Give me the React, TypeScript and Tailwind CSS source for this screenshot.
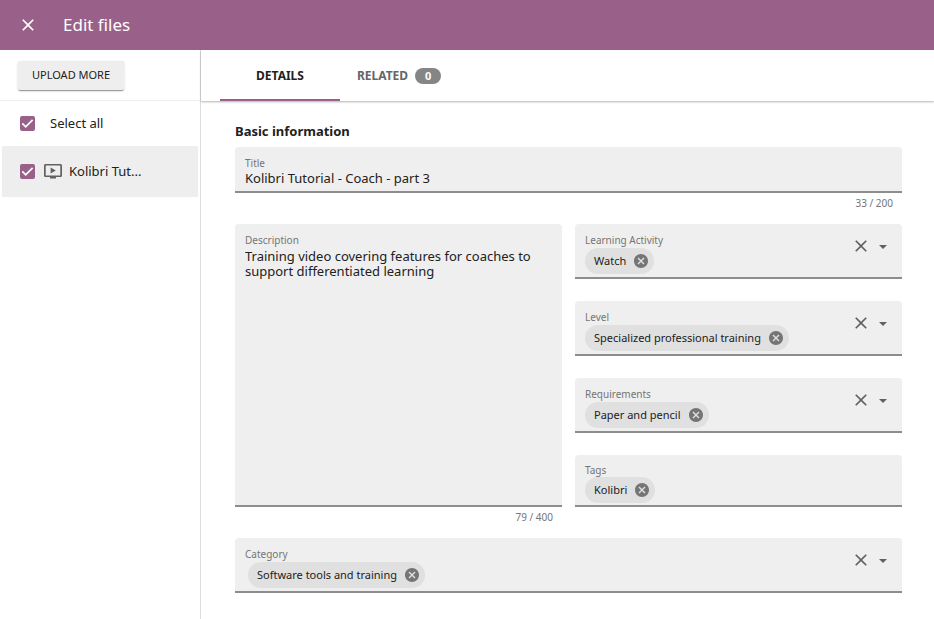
import { useState } from "react";
import type { ReactNode } from "react";

function CloseIcon({ className }: { className: string }) {
  return (
    <svg viewBox="0 0 24 24" className={className} fill="currentColor" aria-hidden="true">
      <path d="M19 6.41 17.59 5 12 10.59 6.41 5 5 6.41 10.59 12 5 17.59 6.41 19 12 13.41 17.59 19 19 17.59 13.41 12z" />
    </svg>
  );
}

function VideoIcon() {
  return (
    <svg viewBox="0 0 18 15" className="h-[15px] w-[18px] shrink-0 text-[#616161]" fill="currentColor" aria-hidden="true">
      <path
        fillRule="evenodd"
        d="M1.7 0h14.6C17.3 0 18 .7 18 1.6v9.8c0 .9-.7 1.6-1.7 1.6H12v1.5H6V13H1.7C.7 13 0 12.3 0 11.4V1.6C0 .7.7 0 1.7 0zm0 1.6v9.8h14.6V1.6z"
      />
      <path d="M6.6 3.4v6.2l5.2-3.1z" />
    </svg>
  );
}

function Tick({ id, label }: { id: string; label: string }) {
  return (
    <span className="grid h-[15px] w-[15px] shrink-0 place-items-center">
      <input
        id={id}
        type="checkbox"
        defaultChecked
        aria-label={label}
        className="peer col-start-1 row-start-1 h-[15px] w-[15px] appearance-none rounded-xs border-2 border-[#616161] checked:border-[#996189] checked:bg-[#996189]"
      />
      <svg
        viewBox="0 0 15 15"
        className="pointer-events-none col-start-1 row-start-1 hidden h-[15px] w-[15px] peer-checked:block"
        fill="none"
        stroke="white"
        strokeWidth="1.7"
        aria-hidden="true"
      >
        <path d="M2.3 7.4 5.7 10.8 12.6 3.9" />
      </svg>
    </span>
  );
}

function Chip({ text, indent = false }: { text: string; indent?: boolean }) {
  return (
    <span
      className={
        indent
          ? "ml-[3px] flex h-[26px] shrink-0 items-center gap-2 rounded-full bg-[#e0e0e0] pr-[6px] pl-[9px] text-[11px]"
          : "flex h-[26px] shrink-0 items-center gap-2 rounded-full bg-[#e0e0e0] pr-[6px] pl-[9px] text-[11px]"
      }
    >
      {text}
      <button type="button" aria-label={`Remove ${text}`} className="text-[#757575]">
        <svg viewBox="2 2 20 20" className="block h-[14px] w-[14px]" fill="currentColor" aria-hidden="true">
          <path d="M12 2C6.47 2 2 6.47 2 12s4.47 10 10 10 10-4.47 10-10S17.53 2 12 2zm5 13.59L15.59 17 12 13.41 8.41 17 7 15.59 10.59 12 7 8.41 8.41 7 12 10.59 15.59 7 17 8.41 13.41 12z" />
        </svg>
      </button>
    </span>
  );
}

const box = "rounded-t border-b-2 border-[#8d8d8d] bg-[#efefef] px-[10px]";
const labelText = "block text-[10px] leading-[14px] text-[#757575]";

function ChipField({
  id,
  label,
  chip,
  indent,
  menu = true,
}: {
  id: string;
  label: string;
  chip: string;
  indent?: boolean;
  menu?: boolean;
}) {
  return (
    <div className={`flex ${box} ${menu ? "h-[55px]" : "h-[52px]"}`}>
      <div className={menu ? "min-w-0 flex-1 pt-[9px]" : "min-w-0 flex-1 pt-2"}>
        <label htmlFor={id} className={labelText}>
          {label}
        </label>
        <div className={menu ? "flex items-center pt-px" : "flex items-center"}>
          <Chip text={chip} indent={indent} />
          <input id={id} type="text" className="w-0 min-w-0 flex-1 bg-transparent text-[13px] outline-none" />
        </div>
      </div>
      {menu && (
        <div className="flex items-start gap-1 pt-3 pr-px text-[#616161]">
          <button type="button" aria-label={`Clear ${label}`}>
            <CloseIcon className="block h-5 w-5" />
          </button>
          <button type="button" aria-label={`Open ${label}`}>
            <svg viewBox="0 0 16 20" className="block h-5 w-4" fill="currentColor" aria-hidden="true">
              <path d="M4 9h8l-4 4z" />
            </svg>
          </button>
        </div>
      )}
    </div>
  );
}

function Tab({ active, onClick, children }: { active: boolean; onClick: () => void; children: ReactNode }) {
  return (
    <button
      type="button"
      role="tab"
      aria-selected={active}
      onClick={onClick}
      className={
        active
          ? "flex min-w-[120px] items-center justify-center border-b-2 border-[#996189] pt-[3px] text-[12px] font-bold text-[#212121]"
          : "flex min-w-[118px] items-center justify-center gap-[7px] border-b-2 border-transparent pt-[3px] text-[12px] font-bold text-[#666666]"
      }
    >
      {children}
    </button>
  );
}

export default function App() {
  const [tab, setTab] = useState("details");
  return (
    <div className="flex min-h-screen flex-col bg-white font-['Noto_Sans',sans-serif] text-[13px] text-[#212121]">
      <header className="flex h-[50px] items-center gap-[25px] bg-[#996189] pl-[18px] text-white">
        <button type="button" aria-label="Close">
          <CloseIcon className="block h-5 w-5" />
        </button>
        <h1 className="text-[17px]">Edit files</h1>
      </header>

      <div className="flex flex-1">
        <aside className="w-[201px] shrink-0 border-r border-[#dddddd]">
          <div className="flex h-[51px] items-center border-b border-[#eeeeee] pl-[18px]">
            <button
              type="button"
              className="h-[29px] rounded-xs bg-[#eeeeee] px-[14px] text-[11px] shadow-[0_2px_1px_-1px_rgba(0,0,0,0.25),0_1px_1px_rgba(0,0,0,0.14),0_1px_3px_rgba(0,0,0,0.14)]"
            >
              UPLOAD MORE
            </button>
          </div>
          <div className="flex h-[45px] items-center gap-[15px] pl-5">
            <Tick id="all" label="Select all" />
            <label htmlFor="all">Select all</label>
          </div>
          <div className="mx-[2px] flex h-[51px] items-center bg-[#eeeeee] pl-[18px]">
            <Tick id="file" label="Kolibri Tutorial" />
            <label htmlFor="file" className="flex items-center gap-[7px] pl-[9px]">
              <VideoIcon />
              Kolibri Tut...
            </label>
          </div>
        </aside>

        <main className="min-w-0 flex-1">
          <div
            role="tablist"
            className="flex h-[51px] pl-[19px] shadow-[0_1px_2px_rgba(0,0,0,0.3)]"
          >
            <Tab active={tab === "details"} onClick={() => setTab("details")}>
              DETAILS
            </Tab>
            <Tab active={tab === "related"} onClick={() => setTab("related")}>
              RELATED
              <span className="flex h-4 w-[26px] items-center justify-center rounded-full bg-[#858585] text-[11px] text-white">
                0
              </span>
            </Tab>
          </div>

          <form className="pt-[19px] pr-8 pb-6 pl-[34px]">
            <h2 className="pb-[5px] text-[13px] leading-[22px] font-bold">Basic information</h2>

            <div className={`h-[46px] pt-[9px] ${box}`}>
              <label htmlFor="title" className={labelText}>
                Title
              </label>
              <input
                id="title"
                type="text"
                defaultValue="Kolibri Tutorial - Coach - part 3"
                className="block h-[18px] w-full bg-transparent text-[13px] outline-none"
              />
            </div>
            <p className="pt-[3px] pr-[9px] pb-[14px] text-right text-[10px] leading-[14px] text-[#757575]">33 / 200</p>

            <div className="grid grid-cols-2 gap-x-[13px]">
              <div className={`flex flex-col pt-[9px] ${box}`}>
                <label htmlFor="description" className={labelText}>
                  Description
                </label>
                <textarea
                  id="description"
                  defaultValue="Training video covering features for coaches to support differentiated learning"
                  className="block w-full flex-1 resize-none bg-transparent pt-[2px] text-[13px] leading-[15px] outline-none"
                />
              </div>
              <div className="flex flex-col gap-[22px]">
                <ChipField id="activity" label="Learning Activity" chip="Watch" />
                <ChipField id="level" label="Level" chip="Specialized professional training" />
                <ChipField id="requirements" label="Requirements" chip="Paper and pencil" />
                <ChipField id="tags" label="Tags" chip="Kolibri" menu={false} />
              </div>
              <p className="pt-[3px] pr-[9px] pb-[14px] text-right text-[10px] leading-[14px] text-[#757575]">79 / 400</p>
            </div>

            <ChipField id="category" label="Category" chip="Software tools and training" indent />
          </form>
        </main>
      </div>
    </div>
  );
}
